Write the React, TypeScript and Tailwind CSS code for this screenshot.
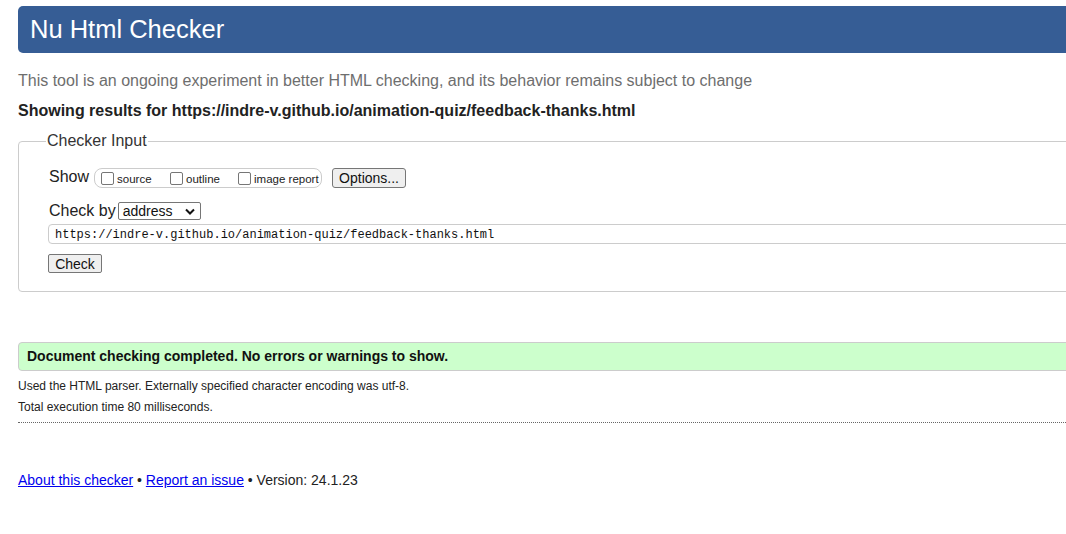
import React from "react";

/** Small square checkbox as drawn by the browser (unchecked). */
function Box({ label }: { label: string }) {
  return (
    <span className="flex items-center">
      <span className="w-[13px] h-[13px] border border-[#767676] rounded-[2px] bg-white" />
      <span className="ml-[3px] text-[11.5px] leading-[13px] text-[#222] mt-[3px]">{label}</span>
    </span>
  );
}

/**
 * App - static copy of the Nu Html Checker result page.
 */
export default function App() {
  return (
    <div
      className="w-[1066px] h-[534px] overflow-hidden bg-white text-[#222]"
      style={{ fontFamily: '"Liberation Sans", Arial, sans-serif' }}
    >
      <div className="ml-[18px] w-[1120px]">
        {/* ---- Header ---- */}
        <div className="mt-[6px] h-[47px] bg-[#365d95] rounded-l-[5px] flex items-center pl-[12px]">
          <h1 className="text-[25.5px] leading-[30px] text-white -mt-[2px]">Nu Html Checker</h1>
        </div>

        {/* ---- Intro ---- */}
        <p className="mt-[19px] text-[16px] leading-[18px] text-[#6e6e6e]">
          This tool is an ongoing experiment in better HTML checking, and its behavior remains subject to change
        </p>
        <p className="mt-[12px] text-[16px] leading-[18px] font-bold text-[#222]">
          Showing results for https://indre-v.github.io/animation-quiz/feedback-thanks.html
        </p>

        {/* ---- Checker input ---- */}
        <fieldset className="mt-[12px] border border-[#cccccc] rounded-l-[4px] pl-[30px] pb-[15px]">
          <legend className="-ml-[3px] px-[1px] text-[16px] leading-[18px] text-[#333]">Checker Input</legend>

          <div className="mt-[18px] h-[20px] flex items-center">
            <span className="text-[16px] leading-[18px] text-[#222] -mt-[2px]">Show</span>
            <div className="ml-[5px] w-[228px] h-[20px] border border-[#cccccc] rounded-[8px] flex items-center pl-[6px]">
              <span className="w-[69px]">
                <Box label="source" />
              </span>
              <span className="w-[68px]">
                <Box label="outline" />
              </span>
              <Box label="image report" />
            </div>
            <button className="ml-[10px] w-[74px] h-[20px] border border-[#767676] rounded-[3px] bg-[#efefef] text-[14px] leading-[16px] text-[#111]">
              Options...
            </button>
          </div>

          <div className="mt-[14px] h-[18px] flex items-center">
            <span className="text-[16px] leading-[18px] text-[#222] -mt-[1px]">Check by</span>
            <div className="ml-[2px] w-[83px] h-[18px] border border-[#767676] rounded-[2px] flex items-center justify-between pl-[4px] pr-[5px]">
              <span className="text-[14px] leading-[16px] text-[#111]">address</span>
              <svg width="10" height="7" viewBox="0 0 10 7">
                <path d="M1 1.5 L5 5.5 L9 1.5" fill="none" stroke="#111" strokeWidth="2" />
              </svg>
            </div>
          </div>

          <div
            className="mt-[4px] -ml-[1px] h-[20px] border border-[#cccccc] rounded-l-[4px] flex items-center pl-[6px] pt-[2px] text-[12px] leading-[14px] text-[#111]"
            style={{ fontFamily: '"Liberation Mono", "DejaVu Sans Mono", monospace' }}
          >
            https://indre-v.github.io/animation-quiz/feedback-thanks.html
          </div>

          <button className="mt-[10px] -ml-[1px] w-[54px] h-[19px] border border-[#767676] rounded-[2px] bg-[#efefef] text-[14px] leading-[16px] text-[#111]">
            Check
          </button>
        </fieldset>

        {/* ---- Result ---- */}
        <div className="mt-[50px] h-[29px] bg-[#ccffcc] border border-[#cccccc] rounded-l-[4px] flex items-center pl-[8px]">
          <span className="text-[14px] leading-[16px] font-bold text-[#111]">
            Document checking completed. No errors or warnings to show.
          </span>
        </div>
        <p className="mt-[8px] text-[12px] leading-[15px] text-[#222]">
          Used the HTML parser. Externally specified character encoding was utf-8.
        </p>
        <p className="mt-[6px] text-[12px] leading-[15px] text-[#222]">Total execution time 80 milliseconds.</p>
        <div className="mt-[7px] border-t border-dotted border-[#666]" />

        {/* ---- Footer ---- */}
        <p className="mt-[49px] text-[14px] leading-[17px] text-[#222]">
          <a href="#" className="text-[#0000ee] underline">About this checker</a>
          {" • "}
          <a href="#" className="text-[#0000ee] underline">Report an issue</a>
          {" • Version: 24.1.23"}
        </p>
      </div>
    </div>
  );
}
